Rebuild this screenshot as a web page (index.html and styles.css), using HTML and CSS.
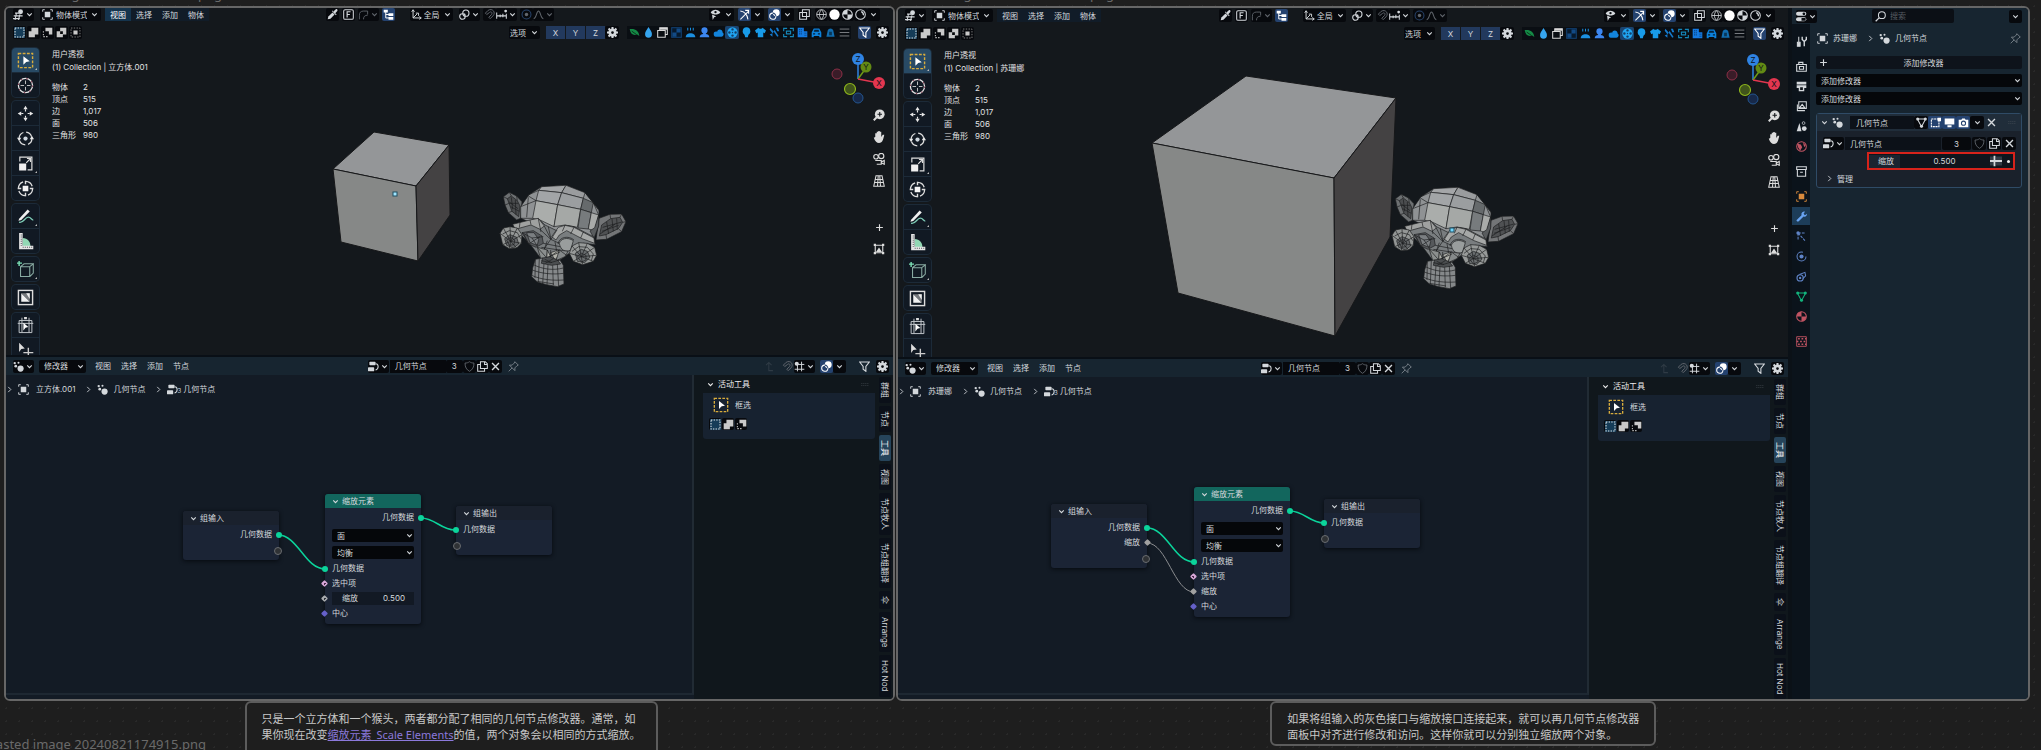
FILE: index.html
```html
<!DOCTYPE html>
<html lang="zh-CN">
<head>
<meta charset="utf-8">
<title>几何节点修改器</title>
<link rel="stylesheet" href="styles.css">
</head>
<body>
<svg class="defs" aria-hidden="true">
  <defs>
    <symbol id="chev" viewBox="0 0 16 16"><path d="M4 6l4 4 4-4" fill="none" stroke="currentColor" stroke-width="2"/></symbol>
    <symbol id="right" viewBox="0 0 16 16"><path d="M5 2l6 6-6 6" fill="none" stroke="currentColor" stroke-width="2"/></symbol>
    <symbol id="view3d" viewBox="0 0 16 16"><path d="M1 10h13M0 14h10M5 6L3 16M10 8L8 16M3 6h6" fill="none" stroke="currentColor" stroke-width="1.5"/><circle cx="11" cy="4" r="3.5" fill="currentColor"/></symbol>
    <symbol id="object" viewBox="0 0 16 16"><path d="M4 4h8v8H4z" fill="currentColor"/><path d="M1 4V1h3M12 1h3v3M15 12v3h-3M4 15H1v-3" fill="none" stroke="currentColor" stroke-width="1.3"/></symbol>
    <symbol id="dropper" viewBox="0 0 16 16"><path d="M1 15l1-4 6-6 3 3-6 6z" fill="currentColor"/><path d="M7 3l6 6 1-1-2-2 3-3c1-2-1-4-3-2L9 4 8 2z" fill="currentColor"/></symbol>
    <symbol id="fbox" viewBox="0 0 16 16"><rect x="1" y="1" width="14" height="14" rx="2" fill="none" stroke="currentColor" stroke-width="1.5"/><path d="M6 12.500V4h5M6 8h4" fill="none" stroke="currentColor" stroke-width="1.700"/></symbol>
    <symbol id="arc" viewBox="0 0 16 16"><path d="M2 15V9c0-4 2-6 6-6h6M14 3v5M8 15c0-4 2-6 6-6" fill="none" stroke="currentColor" stroke-width="1.300"/></symbol>
    <symbol id="tree" viewBox="0 0 16 16"><path d="M1 1h6v4H1zM8 6h7v4H8zM8 11.500h7v4H8z" fill="currentColor"/><path d="M4 4v9h5M4 8h5" fill="none" stroke="currentColor" stroke-width="1.400"/></symbol>
    <symbol id="axes" viewBox="0 0 16 16"><path d="M3 2v11h11M3 13l6-6M1 4l2-3 2 3M12 11l3 2-3 2M7 6h4v4" fill="none" stroke="currentColor" stroke-width="1.400"/></symbol>
    <symbol id="link" viewBox="0 0 16 16"><circle cx="10" cy="6" r="4.500" fill="none" stroke="currentColor" stroke-width="1.600"/><circle cx="5" cy="11" r="4" fill="none" stroke="currentColor" stroke-width="1.600"/><circle cx="8" cy="8" r="1.300" fill="currentColor"/></symbol>
    <symbol id="magnet" viewBox="0 0 16 16"><path d="M2 6l4-4c6-4 12 3 7 8l-4 4-2-2 4-4c2-3-1-5-3-3L4 8z" fill="none" stroke="currentColor" stroke-width="1.400"/></symbol>
    <symbol id="snap" viewBox="0 0 16 16"><path d="M1 5v9M6 8v4M10 7v5M15 7v7M1 10h14" fill="none" stroke="currentColor" stroke-width="1.500"/><circle cx="14" cy="3" r="2" fill="currentColor"/></symbol>
    <symbol id="grid" viewBox="0 0 16 16"><path d="M5 5v10M11 1v14M1 12h14M5 5h10" fill="none" stroke="currentColor" stroke-width="1.400"/><circle cx="4" cy="4" r="3" fill="currentColor"/></symbol>
    <symbol id="prop" viewBox="0 0 16 16"><circle cx="8" cy="8" r="6.500" fill="none" stroke="#27436b" stroke-width="1.500"/><circle cx="8" cy="8" r="2.500" fill="currentColor"/></symbol>
    <symbol id="curve" viewBox="0 0 16 16"><path d="M1 14c4 0 4-11 7-11s3 11 7 11" fill="none" stroke="currentColor" stroke-width="1.500"/></symbol>
    <symbol id="eye" viewBox="0 0 16 16"><path d="M1 5c3-5 11-5 14 0-3 4-11 4-14 0z" fill="currentColor"/><circle cx="8" cy="4.500" r="1.700" fill="#080b0f"/><path d="M3 8l6 3-3 1-2 4z" fill="currentColor"/></symbol>
    <symbol id="gizmo" viewBox="0 0 16 16"><path d="M2 15L14 3M9 2h5v5M2 3c6 1 10 5 11 12" fill="none" stroke="currentColor" stroke-width="1.500"/></symbol>
    <symbol id="overlay" viewBox="0 0 16 16"><circle cx="10.500" cy="5.500" r="5" fill="currentColor"/><circle cx="5.500" cy="10.500" r="4.500" fill="none" stroke="currentColor" stroke-width="1.500"/><path d="M5.500 6a4.500 4.500 0 0 1 4.500 4.500" fill="none" stroke="#24426f" stroke-width="1.500"/></symbol>
    <symbol id="xray" viewBox="0 0 16 16"><path d="M1 5h10v10H1zM5 1h10v10H5z" fill="none" stroke="currentColor" stroke-width="1.500"/></symbol>
    <symbol id="wire" viewBox="0 0 16 16"><circle cx="8" cy="8" r="7" fill="none" stroke="currentColor" stroke-width="1.200"/><path d="M1 8h14M8 1c-4 4-4 10 0 14M8 1c4 4 4 10 0 14" fill="none" stroke="currentColor" stroke-width="1.200"/></symbol>
    <symbol id="solid" viewBox="0 0 16 16"><circle cx="8" cy="8" r="7.500" fill="#fff"/></symbol>
    <symbol id="mat" viewBox="0 0 16 16"><circle cx="8" cy="8" r="7" fill="none" stroke="currentColor" stroke-width="1.500"/><path d="M8 1v7H1a7 7 0 0 1 7-7zM8 8h7a7 7 0 0 1-7 7z" fill="currentColor"/></symbol>
    <symbol id="render" viewBox="0 0 16 16"><circle cx="8" cy="8" r="7" fill="none" stroke="currentColor" stroke-width="1.500"/><path d="M9 4a4 4 0 0 1 3 5" fill="none" stroke="currentColor" stroke-width="2"/></symbol>
    <symbol id="s1" viewBox="0 0 16 16"><rect width="16" height="16" fill="#153c58"/><rect x="1.500" y="1.500" width="13" height="13" fill="none" stroke="#dfe6ea" stroke-width="1.500" stroke-dasharray="2 1.800"/></symbol>
    <symbol id="s2" viewBox="0 0 16 16"><path d="M1 6h4V1h10v10h-5v4H1z" fill="#c9c9c9"/></symbol>
    <symbol id="s3" viewBox="0 0 16 16"><path d="M5 1h10v10h-5V6H5z" fill="#c9c9c9"/><path d="M2 6v8h8" fill="none" stroke="#c9c9c9" stroke-width="1.500" stroke-dasharray="2 2"/></symbol>
    <symbol id="s4" viewBox="0 0 16 16"><path d="M1 6h5V1h9v10h-5v4H1z" fill="#c9c9c9"/><path d="M6 6h4v4H6z" fill="#05070a"/></symbol>
    <symbol id="s5" viewBox="0 0 16 16"><path d="M5 5h6v6H5z" fill="#c9c9c9"/><rect x="1.500" y="1.500" width="13" height="13" fill="none" stroke="#8a8a8a" stroke-width="1.300" stroke-dasharray="2 2"/></symbol>
    <symbol id="gear" viewBox="0 0 16 16"><circle cx="8" cy="8" r="4" fill="none" stroke="currentColor" stroke-width="4"/><path d="M8 0v3M8 13v3M0 8h3M13 8h3M2.300 2.300l2 2M11.700 11.700l2 2M2.300 13.700l2-2M11.700 4.300l2-2" stroke="currentColor" stroke-width="3"/></symbol>
    <symbol id="leaf" viewBox="0 0 16 16"><path d="M1 3c8-1 13 2 14 10l-3-2c-6 2-10-1-11-8z" fill="#148a46"/><path d="M4 6l7 5" stroke="#06130c"/></symbol>
    <symbol id="drop" viewBox="0 0 16 16"><path d="M8 0c3 5 5 7 5 10a5 5.500 0 0 1-10 0c0-3 2-5 5-10z" fill="#35a4ee"/></symbol>
    <symbol id="cards" viewBox="0 0 16 16"><path d="M1 5h11v10H1zM4 5V1h11v10h-3" fill="none" stroke="#d8d8d8" stroke-width="1.500"/><path d="M4 1h11v3H4z" fill="#d8d8d8"/></symbol>
    <symbol id="quad" viewBox="0 0 16 16"><rect x="1" y="1" width="14" height="14" fill="#07192c" stroke="#124072" stroke-width="1.500"/><path d="M8 2h6v6H8zM2 8h6v6H2z" fill="#124a85"/></symbol>
    <symbol id="steam" viewBox="0 0 16 16"><path d="M1 15c0-8 14-8 14 0z" fill="#1b8fe0"/><path d="M4 1v4M8 1v4M12 1v4" stroke="#1b8fe0" stroke-width="1.500"/></symbol>
    <symbol id="user" viewBox="0 0 16 16"><circle cx="8" cy="5" r="4.500" fill="#3c86f0"/><path d="M1 15c0-4 3-5 5-5V7h4v3c2 0 5 1 5 5z" fill="#3c86f0"/></symbol>
    <symbol id="cloud" viewBox="0 0 16 16"><path d="M1 10c0-3 3-4 5-3 1-5 8-4 8 1 3 2 1 6-2 6H4c-2 0-3-2-3-4z" fill="#1384dc"/></symbol>
    <symbol id="ball" viewBox="0 0 16 16"><circle cx="8" cy="8" r="7.500" fill="#20a5f2"/><g fill="#153f69"><circle cx="8" cy="3.500" r="1.700"/><circle cx="8" cy="12.500" r="1.700"/><circle cx="3.500" cy="8" r="1.700"/><circle cx="12.500" cy="8" r="1.700"/><circle cx="8" cy="8" r="1"/></g></symbol>
    <symbol id="bulb" viewBox="0 0 16 16"><circle cx="8" cy="6" r="5.500" fill="#189be9"/><path d="M5 10h6l-1 5H6z" fill="#189be9"/></symbol>
    <symbol id="shirt" viewBox="0 0 16 16"><path d="M5 1c1 2 5 2 6 0l5 4-2 4-2-1v7H4V8L2 9 0 5z" fill="#189be9"/></symbol>
    <symbol id="scatter" viewBox="0 0 16 16"><path d="M2 1l5 6-2 2-4-5zM8 4l6 9-2 1-5-7zM1 11l4-2v5zM10 1l3 0 2 5-3 0z" fill="#147ace"/></symbol>
    <symbol id="scan" viewBox="0 0 16 16"><path d="M1 6V2h5M10 2h5v4M15 10v4h-5M6 14H1v-4M5 6h6v4H5z" fill="none" stroke="#1586b8" stroke-width="1.700"/></symbol>
    <symbol id="city" viewBox="0 0 16 16"><path d="M1 15V1h9v5h5v9z" fill="#147ae2"/><path d="M3 4h5M3 7h5M3 10h5M11 9h3M11 12h3" stroke="#08315f" stroke-width="1.300" stroke-dasharray="1.500 1"/></symbol>
    <symbol id="car" viewBox="0 0 16 16"><path d="M1 15V8l3-6h8l3 6v7h-3v-2H4v2z" fill="#0c81db"/><path d="M5 4h6l1 3H4zM3 9h3v2H3zM10 9h3v2h-3z" fill="#06233d"/></symbol>
    <symbol id="tent" viewBox="0 0 16 16"><path d="M2 14l2-9c1-4 7-4 8 0l2 9z" fill="#116cae"/><path d="M6 7h4v5H6z" fill="#083556"/></symbol>
    <symbol id="menu" viewBox="0 0 16 16"><path d="M1 3h14M1 8h14M1 13h14" stroke="currentColor" stroke-width="1.300"/></symbol>
    <symbol id="filter" viewBox="0 0 16 16"><path d="M1 1.500h14L10 8v7l-4-3V8z" fill="none" stroke="currentColor" stroke-width="1.600"/></symbol>
    <symbol id="boxsel" viewBox="0 0 24 24"><rect x="2" y="2" width="20" height="20" fill="none" stroke="#d9ad3c" stroke-width="2" stroke-dasharray="4 2"/><path d="M9 6l9 7-5 1-4 4z" fill="#fff"/></symbol>
    <symbol id="cursor" viewBox="0 0 24 24"><circle cx="12" cy="12" r="10" fill="none" stroke="#e6e6e6" stroke-width="1.800"/><circle cx="12" cy="12" r="10" fill="none" stroke="#8a4458" stroke-width="1.800" stroke-dasharray="2 6"/><path d="M12 5v5M12 14v5M5 12h5M14 12h5" stroke="#ccc" stroke-width="1.300"/></symbol>
    <symbol id="move" viewBox="0 0 24 24"><path d="M12 1l3 5H9zM12 23l3-5H9zM1 12l5-3v6zM23 12l-5-3v6z" fill="#e8e8e8"/><path d="M12 6v3M12 15v3M6 12h3M15 12h3" stroke="#e8e8e8" stroke-width="1.600"/></symbol>
    <symbol id="rotate" viewBox="0 0 24 24"><circle cx="12" cy="12" r="9" fill="none" stroke="#ddd" stroke-width="1.800" stroke-dasharray="10 4.100"/><circle cx="12" cy="12" r="3" fill="#cfd8e0"/><path d="M0 11h6l-3 5zM24 13h-6l3-5z" fill="#e8e8e8"/></symbol>
    <symbol id="scale" viewBox="0 0 24 24"><path d="M4 9V3h17v18h-6" fill="none" stroke="#ddd" stroke-width="1.700"/><path d="M3 12h10v10H3z" fill="#f0f0f0"/><path d="M13 11l5-5M14 5h5v5" fill="none" stroke="#ddd" stroke-width="1.600"/></symbol>
    <symbol id="transform" viewBox="0 0 24 24"><circle cx="12" cy="12" r="10" fill="none" stroke="#ddd" stroke-width="1.800" stroke-dasharray="12 3.700"/><path d="M8 8h8v8H8z" fill="#f4f4f4"/><path d="M12 1v5M12 18v5M1 12h5M18 12h5" stroke="#ddd" stroke-width="2"/></symbol>
    <symbol id="annotate" viewBox="0 0 24 24"><path d="M3 15L15 2l3 3L6 17l-4 1z" fill="#f0f0f0"/><path d="M3 20c6 2 8-7 13-7 4 0 4 4 7 4" fill="none" stroke="#7cc9b4" stroke-width="1.800"/></symbol>
    <symbol id="measure" viewBox="0 0 24 24"><path d="M8 19V7c7 0 11 5 11 12z" fill="#92d8b4"/><path d="M3 0h5v18h15v5H3z" fill="#e6e6e6"/><path d="M6 2v16M8 20h14" stroke="#55595c" stroke-width="1.500" stroke-dasharray="1.500 1.500"/></symbol>
    <symbol id="addcube" viewBox="0 0 24 24"><path d="M5 8h13v14H5zM5 8l5-4h13l-5 4M23 4v13l-5 5" fill="none" stroke="#88aaa2" stroke-width="1.500"/><path d="M3 0v7M0 3h7" stroke="#7be0b5" stroke-width="2"/></symbol>
    <symbol id="boolean" viewBox="0 0 24 24"><rect x="2" y="2" width="20" height="20" fill="none" stroke="#ddd" stroke-width="2"/><path d="M6 6h12v12z" fill="#76797d"/><path d="M6 6l12 12H6zM13 6h5v8z" fill="#f0f0f0"/></symbol>
    <symbol id="cage" viewBox="0 0 24 24"><path d="M3 5h18v17H3zM7 1v21M17 1v21M1 9h22" fill="none" stroke="#bfc4c9" stroke-width="1.400"/><path d="M9 8l7 6-4 1-3 4z" fill="#fff"/><path d="M10 0h4v3h-4z" fill="#ddd"/></symbol>
    <symbol id="tweak" viewBox="0 0 24 24"><path d="M3 1l8 8-5 1-3 4z" fill="#ddd"/><path d="M16 8v14M9 15h14" stroke="#ccc" stroke-width="2"/></symbol>
    <symbol id="zoomin" viewBox="0 0 16 16"><circle cx="9" cy="7" r="6.500" fill="currentColor"/><path d="M1 15l4-4" stroke="currentColor" stroke-width="2.500"/><path d="M9 4v6M6 7h6" stroke="#14181c" stroke-width="1.500"/></symbol>
    <symbol id="hand" viewBox="0 0 16 16"><path d="M3 8V3h2v4V1h2v6V0h2v7V1h2v7l2-3h2c-1 5-2 11-7 11-3 0-5-2-7-7z" fill="currentColor"/></symbol>
    <symbol id="camera" viewBox="0 0 16 16"><circle cx="4" cy="5" r="3" fill="none" stroke="currentColor" stroke-width="1.500"/><circle cx="11" cy="4" r="3.500" fill="none" stroke="currentColor" stroke-width="1.500"/><path d="M3 10h8v5H5M11 12l4-2v5l-4-2" fill="none" stroke="currentColor" stroke-width="1.500"/></symbol>
    <symbol id="persp" viewBox="0 0 16 16"><path d="M4 1h8l3 14H1zM3 6h10M2 10h12M7 1L6 15M9 1l1 14" fill="none" stroke="currentColor" stroke-width="1.400"/></symbol>
    <symbol id="plus" viewBox="0 0 16 16"><path d="M8 2v12M2 8h12" stroke="currentColor" stroke-width="2"/></symbol>
    <symbol id="image" viewBox="0 0 16 16"><path d="M3 3h10v10H3z" fill="none" stroke="currentColor" stroke-width="1.500"/><path d="M4 12l4-6 4 6zM1 1h3v3H1zM12 1h3v3h-3zM1 12h3v3H1zM12 12h3v3h-3z" fill="currentColor"/></symbol>
    <symbol id="geo" viewBox="0 0 16 16"><circle cx="11" cy="11" r="4.500" fill="currentColor"/><circle cx="2.500" cy="3" r="1.700" fill="currentColor"/><circle cx="8" cy="2.500" r="1.500" fill="currentColor"/><circle cx="4" cy="7.500" r="2" fill="currentColor"/></symbol>
    <symbol id="ntree" viewBox="0 0 16 16"><rect x="2" y="1" width="9" height="5" rx="1" fill="currentColor"/><rect x="0" y="9" width="9" height="6" rx="1" fill="currentColor"/><path d="M11 4c5 0 5 8 0 9" fill="none" stroke="currentColor" stroke-width="1.500"/></symbol>
    <symbol id="shield" viewBox="0 0 16 16"><path d="M8 1c2 1.500 4 2 6.500 2 0 6-2 9.500-6.500 12C3.500 12.500 1.500 9 1.500 3 4 3 6 2.500 8 1z" fill="none" stroke="currentColor" stroke-width="1.300"/></symbol>
    <symbol id="copy" viewBox="0 0 16 16"><path d="M5 1h7l3 3v7H5zM11 1v4h4M5 5H1v10h10v-4" fill="none" stroke="currentColor" stroke-width="1.500"/></symbol>
    <symbol id="x" viewBox="0 0 16 16"><path d="M3 3l10 10M13 3L3 13" stroke="currentColor" stroke-width="2"/></symbol>
    <symbol id="pin" viewBox="0 0 16 16"><path d="M10 1l5 5-2 1-3 3v4L2 6h4l3-3zM6 10l-5 5" fill="none" stroke="currentColor" stroke-width="1.300"/></symbol>
    <symbol id="up" viewBox="0 0 16 16"><path d="M3 6l4-4 4 4M7 2v12h6" fill="none" stroke="currentColor" stroke-width="1.500"/></symbol>
    <symbol id="props" viewBox="0 0 16 16"><rect x="0" y="1" width="15" height="6" rx="3" fill="currentColor"/><rect x="0" y="9" width="15" height="6" rx="3" fill="currentColor"/><circle cx="11.500" cy="4" r="2" fill="#0a0e13"/><path d="M8 10h6v4H8z" fill="#0a0e13"/></symbol>
    <symbol id="search" viewBox="0 0 16 16"><circle cx="10" cy="6" r="5" fill="none" stroke="currentColor" stroke-width="1.500"/><path d="M1 15l5-5" stroke="currentColor" stroke-width="1.800"/></symbol>
    <symbol id="tool" viewBox="0 0 16 16"><path d="M4 1v8M2 9h4v6H2z" stroke="currentColor" stroke-width="1.500" fill="currentColor"/><path d="M9 1v4l3 3 3-3V1M12 7v8" fill="none" stroke="currentColor" stroke-width="2"/></symbol>
    <symbol id="rend" viewBox="0 0 16 16"><path d="M1 5h14v10H1zM4 5V2h6v3M5 8h6v4H5z" fill="none" stroke="currentColor" stroke-width="1.600"/></symbol>
    <symbol id="output" viewBox="0 0 16 16"><path d="M1 1h14v4H1zM1 6h14v4h-3v5H4v-5H1z" fill="currentColor"/><path d="M6 9h4v4H6z" fill="#10161c"/></symbol>
    <symbol id="layer" viewBox="0 0 16 16"><path d="M4 1h11v10H4zM2 5v9h11M5 10l4-5 4 5z" fill="none" stroke="currentColor" stroke-width="1.500"/></symbol>
    <symbol id="scn" viewBox="0 0 16 16"><path d="M1 15L5 3l3 12z" fill="currentColor"/><circle cx="12" cy="11" r="3.500" fill="currentColor"/><circle cx="11" cy="3" r="2" fill="none" stroke="currentColor"/></symbol>
    <symbol id="world" viewBox="0 0 16 16"><circle cx="8" cy="8" r="7" fill="none" stroke="currentColor" stroke-width="1.500"/><path d="M2 4l5 1 2 4-3 5-3-5zM10 2l4 4-2 3z" fill="currentColor"/></symbol>
    <symbol id="archive" viewBox="0 0 16 16"><path d="M1 1h14v4H1zM2 5v10h12V5M6 9h4" fill="none" stroke="currentColor" stroke-width="1.600"/></symbol>
    <symbol id="wrench" viewBox="0 0 16 16"><path d="M1 13l7-7c-1-4 3-6 5-5l-2 3 2 2 3-2c0 4-3 5-5 4l-7 7c-2 1-4-1-3-2z" fill="currentColor"/></symbol>
    <symbol id="parts" viewBox="0 0 16 16"><path d="M3 3v11M3 3h10M3 3l10 11" stroke="currentColor" stroke-width="1.500" stroke-dasharray="4 1.500"/><circle cx="3" cy="3" r="2.500" fill="currentColor"/></symbol>
    <symbol id="phys" viewBox="0 0 16 16"><circle cx="8" cy="8" r="6.500" fill="none" stroke="currentColor" stroke-width="1.500" stroke-dasharray="32 9"/><circle cx="8" cy="8" r="3" fill="currentColor"/></symbol>
    <symbol id="constr" viewBox="0 0 16 16"><circle cx="6" cy="10" r="4.500" fill="none" stroke="currentColor" stroke-width="1.700"/><circle cx="6" cy="10" r="1.700" fill="currentColor"/><path d="M5 5l8-3 1 5-4 4" fill="none" stroke="currentColor" stroke-width="1.500"/></symbol>
    <symbol id="mesh" viewBox="0 0 16 16"><path d="M2 3h12L8 14z" fill="none" stroke="currentColor" stroke-width="1.500"/><circle cx="2.500" cy="3" r="2.200" fill="currentColor"/><circle cx="13.500" cy="3" r="2.200" fill="currentColor"/><circle cx="8" cy="13.500" r="2.200" fill="currentColor"/></symbol>
    <symbol id="checker" viewBox="0 0 16 16"><path d="M1 1h14v14H1z" fill="none" stroke="currentColor" stroke-width="1.300"/><path d="M3 4h12M3 12h12" stroke="currentColor" stroke-width="2.500" stroke-dasharray="2.500 2.500"/><path d="M1 8h14" stroke="currentColor" stroke-width="2.500" stroke-dasharray="2.500 2.500"/></symbol>
    <symbol id="vertsel" viewBox="0 0 16 16"><path d="M2 3h11v11H2z" fill="none" stroke="currentColor" stroke-width="1.600" stroke-dasharray="3 1"/><path d="M11 1h5v5h-5z" fill="#fff"/></symbol>
    <symbol id="screen" viewBox="0 0 16 16"><path d="M1 2h14v9H1zM5 12h6v3H5z" fill="currentColor"/></symbol>
    <symbol id="photo" viewBox="0 0 16 16"><path d="M1 4h4l1-2h4l1 2h4v11H1z" fill="currentColor"/><circle cx="8" cy="9" r="3" fill="none" stroke="#24426f" stroke-width="1.500"/></symbol>
    <symbol id="attr" viewBox="0 0 16 16"><path d="M0 2h5v5H0zM8 2h8v5H8zM0 9h5v5H0zM8 9h8v5H8z" fill="#313a44"/><path d="M6 1v14M0 8h16" stroke="currentColor" stroke-width="2.500"/></symbol>
    <symbol id="grip" viewBox="0 0 16 8"><path d="M1 2h14M1 6h14" stroke="currentColor" stroke-width="1.500" stroke-dasharray="1.500 2.500"/></symbol>

    <g id="axis-gizmo">
      <path d="M32 31V12" stroke="#2f83e3" stroke-width="1.500"/><path d="M32 31l8-11" stroke="#6f9a16" stroke-width="1.500"/><path d="M32 31l21 4" stroke="#e3364f" stroke-width="1.500"/>
      <circle cx="11" cy="26" r="5" fill="#3a1c28" stroke="#8c2f46"/><circle cx="32" cy="50" r="5" fill="#17294a" stroke="#24558f"/>
      <circle cx="24" cy="41" r="5.500" fill="#40541b" stroke="#8db51c" stroke-width="1.200"/>
      <circle cx="40" cy="19" r="5.500" fill="#638a14"/><circle cx="32" cy="11" r="6" fill="#2f83e3"/><circle cx="53" cy="35" r="6" fill="#e3364f"/>
      <g font-family="Inter, sans-serif" font-size="8" text-anchor="middle" fill="#0c1118"><text x="32" y="14">Z</text><text x="40" y="22">Y</text><text x="53" y="38">X</text></g>
    </g>

    <g id="monkey" stroke="#1b1c1e" stroke-width="2" stroke-linejoin="round" fill="none">
      <path fill="#6d7072" d="M160 260L178 247 200 258 216 275 212 325 200 330 175 308 165 285z"/>
      <path fill="#4b4d4f" d="M172 266L184 258 202 272 210 288 206 320 186 304z"/>
      <path d="M160 260l12 6M178 247l6 11M200 258l2 14M165 285l10-4M175 308l11-4M178 276l26 20M184 262l4 36M196 270l2 44M182 290l26 14M175 280l30 0"/>
      <path fill="#737577" d="M447 325L480 313 515 312 528 335 515 365 470 388 438 390z"/>
      <path fill="#4f5153" d="M455 345L482 326 510 322 518 337 505 356 468 374 448 378z"/>
      <path d="M480 313l2 13M515 312l-5 10M528 335l-10 2M515 365l-10-9M470 388l-2-14M458 352l58-16M456 364l50-18M470 336l6 36M486 326l4 38M500 325l2 34M450 372l46-30"/>
      <path fill="#8f9294" d="M275 230L348 226 405 248 447 300 446 345 432 385 300 362 212 325 212 290 237 254z"/>
      <path fill="#a4a6a8" d="M275 230L348 226 335 248 266 241z"/>
      <path fill="#9a9c9e" d="M348 226L405 248 400 265 335 248z"/>
      <path fill="#a2a5a7" d="M266 241L335 248 323 284 258 272z"/>
      <path fill="#9b9ea0" d="M335 248L400 265 392 298 323 284z"/>
      <path fill="#aaadab" d="M258 272L323 284 312 350 270 330 248 325z"/>
      <path fill="#a5a8a6" d="M323 284L392 298 382 352 345 345 312 350z"/>
      <path fill="#666a6c" d="M400 265L430 278 424 308 392 298z"/>
      <path fill="#777b7d" d="M392 298L424 308 415 357 384 354z"/>
      <path fill="#a9aba9" d="M424 308L446 315 434 362 415 357z"/>
      <path fill="#595c5e" d="M446 315l0 33-14 37-12-22 14-10z"/>
      <path d="M405 248l25 30 17 24M430 278l16 37M237 254l29-13M212 290l46-18M235 262l-5 60M258 272l-23-14M212 325l36 0"/>
      <path fill="#797d7f" d="M190 345L240 332 265 326 285 345 320 362 345 346 372 350 430 380 436 404 400 400 330 450 308 455 272 445 240 402 196 358z"/>
      <path fill="#9fa1a0" d="M188 343L240 330 265 325 283 348 270 358 243 345 196 358z"/>
      <path fill="#a6a8a7" d="M325 352L345 346 372 352 432 384 434 400 396 386 350 362 328 375 318 390 305 380z"/>
      <path fill="#56595c" d="M216 368L250 362 276 378 280 400 258 412 236 402z"/>
      <path fill="#7b7f82" d="M230 368L252 368 266 388 262 406 240 398z"/>
      <path fill="#999d9d" d="M328 400c4-14 24-20 42-8l-8 28c-14 8-30 2-34-20z"/>
      <path d="M324 402c4-22 32-26 48-12M216 368l30 16 34-4M246 384l16 24M222 374l14 28 34-22M283 348l20 40 18-28M270 358l32 30-20 30M302 388l26 12M265 326l8 40M295 350l8 38M345 346l-8 18M372 352l-10 20M400 366l-8 18M240 330l3 14M210 337l-2 16M280 400l50 10M274 412l54 8M292 392l-12 34M315 395l5 28"/>
      <path fill="#8b8f8e" d="M262 412L292 420 290 446 272 445z"/><path fill="#b0b1aa" d="M292 420L302 440 290 448zM302 428L325 420 330 432 315 450z"/>
      <path fill="#85898a" d="M328 420L354 424 345 440 318 452z"/><path d="M262 412l30 34 36-26 22 16M302 420v34M280 448l50-22"/>
      <path fill="#85888a" d="M256 448L278 444 300 456 330 450 340 466 342 522 322 530 290 524 262 516 245 500 248 474z"/>
      <path fill="#4b4e50" d="M278 444L300 440 322 450 332 462 305 466 274 460z"/>
      <path d="M256 448l-1 56M268 446l-3 70M282 460l-4 62M294 464l-3 60M308 466l2 60M322 462l4 66M250 464c28 14 60 18 90 10M247 480c30 12 64 14 94 10M245 496c30 14 66 16 97 14M262 514l50 8M274 452l28 6 26-8M284 448l22 10M310 446l-24 14"/>
      <path fill="#939695" d="M150 370L160 354 180 350 202 354 216 374 214 400 200 414 178 416 158 404z"/>
      <path fill="#66696b" d="M164 386L180 374 200 382 206 402 190 414 170 406z"/>
      <path d="M182 394L150 370M182 394l-22-40M182 394l-2-44M182 394l20-40M182 394l34-20M182 394l32 6M182 394l18 20M182 394l-4 22M182 394l-24 10M158 372l20-10 24 6 10 18M170 390l12-8 12 8-2 14-14 2z"/>
      <path fill="#979a99" d="M358 430L366 408 386 398 412 400 434 412 440 436 430 454 398 464 370 454z"/>
      <path fill="#696d6f" d="M376 430L394 418 412 424 420 442 404 458 382 454z"/>
      <path d="M394 440L358 430M394 440l-28-32M394 440l-8-42M394 440l18-40M394 440l40-28M394 440l46-4M394 440l36 14M394 440l4 24M394 440l-24 14M366 424l20-14 26 2 18 20-6 20M382 440l12-10 14 6 0 14-14 6z"/>
    </g>
  </defs>
</svg>

<main class="board">
  <section class="column">
    <p class="file-name file-name-top">Pasted image 20240821174915.png</p>
    <div class="card">
      <div class="editors">
        <section class="viewport">
          <svg class="scene" aria-label="立方体和猴头">
            <g stroke="#17181a" stroke-width="1" stroke-linejoin="round">
              <path fill="#949698" d="M327 161l41-37 75 13-33 41z"/><path fill="#868887" d="M327 161l83 17 2 75-77-19z"/><path fill="#444243" d="M410 178l33-41 1 70-32 46z"/>
            </g>
            <rect x="387" y="184" width="4" height="4" fill="#a2e6ff" stroke="#1f4e62"/>
            <use href="#monkey" transform="translate(444 102) scale(.3333)"/>
          </svg>
          <header class="bar">
            <button class="dark pair" aria-label="编辑器类型"><svg class="i"><use href="#view3d"/></svg><svg class="c"><use href="#chev"/></svg></button>
            <label class="dark sel mode"><svg class="i"><use href="#object"/></svg><select aria-label="模式"><option>物体模式</option></select><svg class="c"><use href="#chev"/></svg></label>
            <nav class="menus boxed"><button class="on">视图</button><button>选择</button><button>添加</button><button>物体</button></nav>
            <span class="grow3"></span>
            <div class="tools-mid">
              <button class="dark" aria-label="吸管"><svg class="i"><use href="#dropper"/></svg></button>
              <button class="dark" aria-label="F"><svg class="i"><use href="#fbox"/></svg></button>
              <button class="dark pair dim" aria-label="曲线"><svg class="i"><use href="#arc"/></svg><svg class="c"><use href="#chev"/></svg></button>
              <button class="blue" aria-label="层级"><svg class="i"><use href="#tree"/></svg></button>
              <label class="dark sel orient"><svg class="i"><use href="#axes"/></svg><select aria-label="坐标系"><option>全局</option></select><svg class="c"><use href="#chev"/></svg></label>
              <button class="dark pair" aria-label="轴心"><svg class="i"><use href="#link"/></svg><svg class="c"><use href="#chev"/></svg></button>
              <div class="set"><button class="dark dim" aria-label="吸附"><svg class="i"><use href="#magnet"/></svg></button><button class="dark pair" aria-label="吸附选项"><svg class="i"><use href="#snap"/></svg><svg class="c"><use href="#chev"/></svg></button></div>
              <div class="set"><button class="dark dim" aria-label="衰减"><svg class="i"><use href="#prop"/></svg></button><button class="dark pair dim" aria-label="衰减曲线"><svg class="i"><use href="#curve"/></svg><svg class="c"><use href="#chev"/></svg></button></div>
            </div>
            <span class="grow4"></span>
            <div class="tools-right">
              <button class="dark wide" aria-label="可见性"><svg class="i"><use href="#eye"/></svg><svg class="c"><use href="#chev"/></svg></button>
              <div class="set"><button class="blue" aria-label="控件"><svg class="i"><use href="#gizmo"/></svg></button><button class="dark" aria-label="控件选项"><svg class="c"><use href="#chev"/></svg></button></div>
              <div class="set"><button class="blue" aria-label="叠加层"><svg class="i"><use href="#overlay"/></svg></button><button class="dark" aria-label="叠加层选项"><svg class="c"><use href="#chev"/></svg></button></div>
              <button class="dark" aria-label="透视"><svg class="i"><use href="#xray"/></svg></button>
              <div class="set"><button class="dark" aria-label="线框"><svg class="i"><use href="#wire"/></svg></button><button class="dark" aria-label="实体"><svg class="i"><use href="#solid"/></svg></button><button class="dark" aria-label="材质"><svg class="i"><use href="#mat"/></svg></button><button class="dark" aria-label="渲染"><svg class="i"><use href="#render"/></svg></button><button class="dark" aria-label="着色选项"><svg class="c"><use href="#chev"/></svg></button></div>
            </div>
          </header>
          <header class="bar bar-second">
            <div class="set select-modes"><button class="dark" aria-label="新建选择"><svg><use href="#s1"/></svg></button><button class="dark" aria-label="扩展"><svg><use href="#s2"/></svg></button><button class="dark" aria-label="减去"><svg><use href="#s3"/></svg></button><button class="dark" aria-label="反转"><svg><use href="#s4"/></svg></button><button class="dark" aria-label="相交"><svg><use href="#s5"/></svg></button></div>
            <div class="push">
              <button class="dark opt">选项<svg class="c"><use href="#chev"/></svg></button>
              <div class="xyz"><button>X</button><button>Y</button><button>Z</button></div>
              <button class="dark" aria-label="设置"><svg class="i"><use href="#gear"/></svg></button>
            </div>
            <div class="shelf">
              <button aria-label="植物"><svg><use href="#leaf"/></svg></button><button aria-label="液体"><svg><use href="#drop"/></svg></button><button aria-label="卡片"><svg><use href="#cards"/></svg></button><button aria-label="网格"><svg><use href="#quad"/></svg></button><button aria-label="烟雾"><svg><use href="#steam"/></svg></button><button aria-label="角色"><svg><use href="#user"/></svg></button><button aria-label="云"><svg><use href="#cloud"/></svg></button><button class="blue" aria-label="球"><svg><use href="#ball"/></svg></button><button aria-label="灯"><svg><use href="#bulb"/></svg></button><button aria-label="布料"><svg><use href="#shirt"/></svg></button><button aria-label="散布"><svg><use href="#scatter"/></svg></button><button aria-label="扫描"><svg><use href="#scan"/></svg></button><button aria-label="建筑"><svg><use href="#city"/></svg></button><button aria-label="汽车"><svg><use href="#car"/></svg></button><button aria-label="帐篷"><svg><use href="#tent"/></svg></button><button aria-label="菜单"><svg><use href="#menu"/></svg></button>
            </div>
            <div class="ends"><button class="blue" aria-label="筛选"><svg class="i"><use href="#filter"/></svg></button><button class="dark" aria-label="设置"><svg class="i"><use href="#gear"/></svg></button></div>
          </header>
          <div class="stage">
            <div class="toolbar">
              <div class="tool-group"><button class="on sub" aria-label="框选"><svg><use href="#boxsel"/></svg></button><button aria-label="游标"><svg><use href="#cursor"/></svg></button></div>
              <div class="tool-group"><button aria-label="移动"><svg><use href="#move"/></svg></button><button aria-label="旋转"><svg><use href="#rotate"/></svg></button><button class="sub" aria-label="缩放"><svg><use href="#scale"/></svg></button><button aria-label="变换"><svg><use href="#transform"/></svg></button></div>
              <div class="tool-group"><button class="sub" aria-label="标注"><svg><use href="#annotate"/></svg></button><button aria-label="测量"><svg><use href="#measure"/></svg></button></div>
              <div class="tool-group"><button class="sub" aria-label="添加立方体"><svg><use href="#addcube"/></svg></button></div>
              <div class="tool-group"><button aria-label="布尔"><svg><use href="#boolean"/></svg></button></div>
              <div class="tool-group"><button aria-label="框架"><svg><use href="#cage"/></svg></button><button aria-label="调整"><svg><use href="#tweak"/></svg></button></div>
            </div>
            <div class="info">
              <p>用户透视</p><p>(1) Collection | 立方体.001</p>
              <dl><dt>物体</dt><dd>2</dd><dt>顶点</dt><dd>515</dd><dt>边</dt><dd>1,017</dd><dt>面</dt><dd>506</dd><dt>三角形</dt><dd>980</dd></dl>
            </div>
            <div class="nav-side">
              <svg class="axis"><use href="#axis-gizmo"/></svg>
              <div class="nav-icons"><button aria-label="缩放视图"><svg><use href="#zoomin"/></svg></button><button aria-label="平移"><svg><use href="#hand"/></svg></button><button aria-label="相机"><svg><use href="#camera"/></svg></button><button aria-label="透视"><svg><use href="#persp"/></svg></button><button class="apart" aria-label="添加"><svg><use href="#plus"/></svg></button><button aria-label="图像"><svg><use href="#image"/></svg></button></div>
            </div>
          </div>
        </section>
        <section class="nodes">
          <header class="bar node-bar">
            <button class="dark pair" aria-label="编辑器类型"><svg class="i"><use href="#geo"/></svg><svg class="c"><use href="#chev"/></svg></button>
            <label class="dark sel kind"><select aria-label="类型"><option>修改器</option></select><svg class="c"><use href="#chev"/></svg></label>
            <nav class="menus"><button>视图</button><button>选择</button><button>添加</button><button>节点</button></nav>
            <span class="grow5"></span>
            <div class="set data"><button class="dark pair" aria-label="浏览"><svg class="i"><use href="#ntree"/></svg><svg class="c"><use href="#chev"/></svg></button><input class="name" aria-label="节点树" value="几何节点"><button class="dark count">3</button><button class="dark dim" aria-label="伪用户"><svg class="i"><use href="#shield"/></svg></button><button class="dark" aria-label="复制"><svg class="i"><use href="#copy"/></svg></button><button class="dark" aria-label="断开"><svg class="i"><use href="#x"/></svg></button><button class="pin" aria-label="固定"><svg class="i"><use href="#pin"/></svg></button></div>
            <span class="grow7"></span>
            <div class="node-right"><button class="faint" aria-label="上级"><svg class="i"><use href="#up"/></svg></button><div class="set"><button class="dim" aria-label="吸附"><svg class="i"><use href="#magnet"/></svg></button><button class="dark pair" aria-label="吸附到"><svg class="i"><use href="#grid"/></svg><svg class="c"><use href="#chev"/></svg></button></div><div class="set"><button class="blue" aria-label="叠加层"><svg class="i"><use href="#overlay"/></svg></button><button class="dark" aria-label="叠加层选项"><svg class="c"><use href="#chev"/></svg></button></div></div>
            <div class="ends"><button aria-label="筛选"><svg class="i"><use href="#filter"/></svg></button><button class="dark" aria-label="设置"><svg class="i"><use href="#gear"/></svg></button></div>
          </header>
          <div class="node-body">
            <div class="node-canvas">
              <div class="crumbs"><svg class="sep"><use href="#right"/></svg><svg class="i"><use href="#object"/></svg><span>立方体.001</span><svg class="sep"><use href="#right"/></svg><svg class="i"><use href="#geo"/></svg><span>几何节点</span><svg class="sep"><use href="#right"/></svg><svg class="i"><use href="#ntree"/></svg><sub>3</sub><span>几何节点</span></div>
              <svg class="wires"><path d="M272 160c20 0 27 34 47 34M415 143c14 0 20 12 34 12" fill="none" stroke="#0bd49b" stroke-width="1.500"/></svg>
              <article class="node n-in-a"><h3><svg class="c"><use href="#chev"/></svg>组输入</h3><p class="out geo">几何数据</p><p class="out virt"></p></article>
              <article class="node n-scale-a"><h3 class="teal"><svg class="c"><use href="#chev"/></svg>缩放元素</h3><p class="out geo">几何数据</p>
                <label class="drop"><select aria-label="域"><option>面</option></select><svg class="c"><use href="#chev"/></svg></label><label class="drop"><select aria-label="缩放模式"><option>均衡</option></select><svg class="c"><use href="#chev"/></svg></label>
                <p class="in geo">几何数据</p><p class="in dia pink">选中项</p><div class="in dia grey field"><label for="node-scale">缩放</label><input id="node-scale" value="0.500"></div><p class="in dia violet">中心</p></article>
              <article class="node n-out-a"><h3><svg class="c"><use href="#chev"/></svg>组输出</h3><p class="in geo">几何数据</p><p class="in virt"></p></article>
            </div>
            <aside class="side">
              <div class="panel"><h2><svg class="c"><use href="#chev"/></svg>活动工具<svg class="grip"><use href="#grip"/></svg></h2>
                <div class="panel-box"><p><svg class="bx"><use href="#boxsel"/></svg>框选</p><div class="set select-modes"><button class="dark" aria-label="新建"><svg><use href="#s1"/></svg></button><button class="dark" aria-label="扩展"><svg><use href="#s2"/></svg></button><button class="dark" aria-label="减去"><svg><use href="#s3"/></svg></button></div></div></div>
              <nav class="tabs"><button>群组</button><button>节点</button><button class="on">工具</button><button>视图</button><button>节点牧人</button><button>节点组翻译</button><button>伞</button><button>Arrange</button><button>Hot Nod</button></nav>
            </aside>
          </div>
        </section>
      </div>
    </div>
    <div class="below">
      <p class="file-name file-name-bottom">Pasted image 20240821174915.png</p>
      <div class="note note-a">只是一个立方体和一个猴头，两者都分配了相同的几何节点修改器。通常，如<br>果你现在改变<a href="#scale-elements">缩放元素_Scale Elements</a>的值，两个对象会以相同的方式缩放。</div>
    </div>
  </section>

  <section class="column">
    <p class="file-name file-name-top">Pasted image 20240821174915.png</p>
    <div class="card second">
      <div class="editors">
        <section class="viewport">
          <svg class="scene" aria-label="放大的立方体和猴头">
            <g stroke="#17181a" stroke-width="1" stroke-linejoin="round">
              <path fill="#949698" d="M254 135l94-67 150 22-62 80z"/><path fill="#868887" d="M254 135l182 35 1 158-157-43z"/><path fill="#444243" d="M436 170l62-80-6 139-55 99z"/>
            </g>
            <use href="#monkey" transform="translate(444 104) scale(.3333)"/>
            <rect x="552" y="220" width="4" height="4" fill="#71d8ff" stroke="#1f4e62"/>
          </svg>
          <header class="bar">
            <button class="dark pair" aria-label="编辑器类型"><svg class="i"><use href="#view3d"/></svg><svg class="c"><use href="#chev"/></svg></button>
            <label class="dark sel mode"><svg class="i"><use href="#object"/></svg><select aria-label="模式"><option>物体模式</option></select><svg class="c"><use href="#chev"/></svg></label>
            <nav class="menus boxed"><button>视图</button><button>选择</button><button>添加</button><button>物体</button></nav>
            <span class="grow3"></span>
            <div class="tools-mid">
              <button class="dark" aria-label="吸管"><svg class="i"><use href="#dropper"/></svg></button>
              <button class="dark" aria-label="F"><svg class="i"><use href="#fbox"/></svg></button>
              <button class="dark pair dim" aria-label="曲线"><svg class="i"><use href="#arc"/></svg><svg class="c"><use href="#chev"/></svg></button>
              <button class="blue" aria-label="层级"><svg class="i"><use href="#tree"/></svg></button>
              <label class="dark sel orient"><svg class="i"><use href="#axes"/></svg><select aria-label="坐标系"><option>全局</option></select><svg class="c"><use href="#chev"/></svg></label>
              <button class="dark pair" aria-label="轴心"><svg class="i"><use href="#link"/></svg><svg class="c"><use href="#chev"/></svg></button>
              <div class="set"><button class="dark dim" aria-label="吸附"><svg class="i"><use href="#magnet"/></svg></button><button class="dark pair" aria-label="吸附选项"><svg class="i"><use href="#snap"/></svg><svg class="c"><use href="#chev"/></svg></button></div>
              <div class="set"><button class="dark dim" aria-label="衰减"><svg class="i"><use href="#prop"/></svg></button><button class="dark pair dim" aria-label="衰减曲线"><svg class="i"><use href="#curve"/></svg><svg class="c"><use href="#chev"/></svg></button></div>
            </div>
            <span class="grow4"></span>
            <div class="tools-right">
              <button class="dark wide" aria-label="可见性"><svg class="i"><use href="#eye"/></svg><svg class="c"><use href="#chev"/></svg></button>
              <div class="set"><button class="blue" aria-label="控件"><svg class="i"><use href="#gizmo"/></svg></button><button class="dark" aria-label="控件选项"><svg class="c"><use href="#chev"/></svg></button></div>
              <div class="set"><button class="blue" aria-label="叠加层"><svg class="i"><use href="#overlay"/></svg></button><button class="dark" aria-label="叠加层选项"><svg class="c"><use href="#chev"/></svg></button></div>
              <button class="dark" aria-label="透视"><svg class="i"><use href="#xray"/></svg></button>
              <div class="set"><button class="dark" aria-label="线框"><svg class="i"><use href="#wire"/></svg></button><button class="dark" aria-label="实体"><svg class="i"><use href="#solid"/></svg></button><button class="dark" aria-label="材质"><svg class="i"><use href="#mat"/></svg></button><button class="dark" aria-label="渲染"><svg class="i"><use href="#render"/></svg></button><button class="dark" aria-label="着色选项"><svg class="c"><use href="#chev"/></svg></button></div>
            </div>
          </header>
          <header class="bar bar-second">
            <div class="set select-modes"><button class="dark" aria-label="新建选择"><svg><use href="#s1"/></svg></button><button class="dark" aria-label="扩展"><svg><use href="#s2"/></svg></button><button class="dark" aria-label="减去"><svg><use href="#s3"/></svg></button><button class="dark" aria-label="反转"><svg><use href="#s4"/></svg></button><button class="dark" aria-label="相交"><svg><use href="#s5"/></svg></button></div>
            <div class="push">
              <button class="dark opt">选项<svg class="c"><use href="#chev"/></svg></button>
              <div class="xyz"><button>X</button><button>Y</button><button>Z</button></div>
              <button class="dark" aria-label="设置"><svg class="i"><use href="#gear"/></svg></button>
            </div>
            <div class="shelf">
              <button aria-label="植物"><svg><use href="#leaf"/></svg></button><button aria-label="液体"><svg><use href="#drop"/></svg></button><button aria-label="卡片"><svg><use href="#cards"/></svg></button><button aria-label="网格"><svg><use href="#quad"/></svg></button><button aria-label="烟雾"><svg><use href="#steam"/></svg></button><button aria-label="角色"><svg><use href="#user"/></svg></button><button aria-label="云"><svg><use href="#cloud"/></svg></button><button class="blue" aria-label="球"><svg><use href="#ball"/></svg></button><button aria-label="灯"><svg><use href="#bulb"/></svg></button><button aria-label="布料"><svg><use href="#shirt"/></svg></button><button aria-label="散布"><svg><use href="#scatter"/></svg></button><button aria-label="扫描"><svg><use href="#scan"/></svg></button><button aria-label="建筑"><svg><use href="#city"/></svg></button><button aria-label="汽车"><svg><use href="#car"/></svg></button><button aria-label="帐篷"><svg><use href="#tent"/></svg></button><button aria-label="菜单"><svg><use href="#menu"/></svg></button>
            </div>
            <div class="ends"><button class="blue" aria-label="筛选"><svg class="i"><use href="#filter"/></svg></button><button class="dark" aria-label="设置"><svg class="i"><use href="#gear"/></svg></button></div>
          </header>
          <div class="stage">
            <div class="toolbar">
              <div class="tool-group"><button class="on sub" aria-label="框选"><svg><use href="#boxsel"/></svg></button><button aria-label="游标"><svg><use href="#cursor"/></svg></button></div>
              <div class="tool-group"><button aria-label="移动"><svg><use href="#move"/></svg></button><button aria-label="旋转"><svg><use href="#rotate"/></svg></button><button class="sub" aria-label="缩放"><svg><use href="#scale"/></svg></button><button aria-label="变换"><svg><use href="#transform"/></svg></button></div>
              <div class="tool-group"><button class="sub" aria-label="标注"><svg><use href="#annotate"/></svg></button><button aria-label="测量"><svg><use href="#measure"/></svg></button></div>
              <div class="tool-group"><button class="sub" aria-label="添加立方体"><svg><use href="#addcube"/></svg></button></div>
              <div class="tool-group"><button aria-label="布尔"><svg><use href="#boolean"/></svg></button></div>
              <div class="tool-group"><button aria-label="框架"><svg><use href="#cage"/></svg></button><button aria-label="调整"><svg><use href="#tweak"/></svg></button></div>
            </div>
            <div class="info">
              <p>用户透视</p><p>(1) Collection | 苏珊娜</p>
              <dl><dt>物体</dt><dd>2</dd><dt>顶点</dt><dd>515</dd><dt>边</dt><dd>1,017</dd><dt>面</dt><dd>506</dd><dt>三角形</dt><dd>980</dd></dl>
            </div>
            <div class="nav-side">
              <svg class="axis"><use href="#axis-gizmo"/></svg>
              <div class="nav-icons"><button aria-label="缩放视图"><svg><use href="#zoomin"/></svg></button><button aria-label="平移"><svg><use href="#hand"/></svg></button><button aria-label="相机"><svg><use href="#camera"/></svg></button><button aria-label="透视"><svg><use href="#persp"/></svg></button><button class="apart" aria-label="添加"><svg><use href="#plus"/></svg></button><button aria-label="图像"><svg><use href="#image"/></svg></button></div>
            </div>
          </div>
        </section>
        <section class="nodes">
          <header class="bar node-bar">
            <button class="dark pair" aria-label="编辑器类型"><svg class="i"><use href="#geo"/></svg><svg class="c"><use href="#chev"/></svg></button>
            <label class="dark sel kind"><select aria-label="类型"><option>修改器</option></select><svg class="c"><use href="#chev"/></svg></label>
            <nav class="menus"><button>视图</button><button>选择</button><button>添加</button><button>节点</button></nav>
            <span class="grow5"></span>
            <div class="set data"><button class="dark pair" aria-label="浏览"><svg class="i"><use href="#ntree"/></svg><svg class="c"><use href="#chev"/></svg></button><input class="name" aria-label="节点树" value="几何节点"><button class="dark count">3</button><button class="dark dim" aria-label="伪用户"><svg class="i"><use href="#shield"/></svg></button><button class="dark" aria-label="复制"><svg class="i"><use href="#copy"/></svg></button><button class="dark" aria-label="断开"><svg class="i"><use href="#x"/></svg></button><button class="pin" aria-label="固定"><svg class="i"><use href="#pin"/></svg></button></div>
            <span class="grow7"></span>
            <div class="node-right"><button class="faint" aria-label="上级"><svg class="i"><use href="#up"/></svg></button><div class="set"><button class="dim" aria-label="吸附"><svg class="i"><use href="#magnet"/></svg></button><button class="dark pair" aria-label="吸附到"><svg class="i"><use href="#grid"/></svg><svg class="c"><use href="#chev"/></svg></button></div><div class="set"><button class="blue" aria-label="叠加层"><svg class="i"><use href="#overlay"/></svg></button><button class="dark" aria-label="叠加层选项"><svg class="c"><use href="#chev"/></svg></button></div></div>
            <div class="ends"><button aria-label="筛选"><svg class="i"><use href="#filter"/></svg></button><button class="dark" aria-label="设置"><svg class="i"><use href="#gear"/></svg></button></div>
          </header>
          <div class="node-body">
            <div class="node-canvas">
              <div class="crumbs"><svg class="sep"><use href="#right"/></svg><svg class="i"><use href="#object"/></svg><span>苏珊娜</span><svg class="sep"><use href="#right"/></svg><svg class="i"><use href="#geo"/></svg><span>几何节点</span><svg class="sep"><use href="#right"/></svg><svg class="i"><use href="#ntree"/></svg><sub>3</sub><span>几何节点</span></div>
              <svg class="wires"><path d="M249 166c20 0 27 49 47 49" fill="none" stroke="#8b8d90" stroke-width="1"/><path d="M249 151c20 0 27 34 47 34M392 134c14 0 20 12 34 12" fill="none" stroke="#0bd49b" stroke-width="1.500"/></svg>
              <article class="node n-in-b"><h3><svg class="c"><use href="#chev"/></svg>组输入</h3><p class="out geo">几何数据</p><p class="out dia silver">缩放</p><p class="out virt"></p></article>
              <article class="node n-scale-b"><h3 class="teal"><svg class="c"><use href="#chev"/></svg>缩放元素</h3><p class="out geo">几何数据</p>
                <label class="drop"><select aria-label="域"><option>面</option></select><svg class="c"><use href="#chev"/></svg></label><label class="drop"><select aria-label="缩放模式"><option>均衡</option></select><svg class="c"><use href="#chev"/></svg></label>
                <p class="in geo">几何数据</p><p class="in dia pink">选中项</p><p class="in dia silver">缩放</p><p class="in dia violet">中心</p></article>
              <article class="node n-out-b"><h3><svg class="c"><use href="#chev"/></svg>组输出</h3><p class="in geo">几何数据</p><p class="in virt"></p></article>
            </div>
            <aside class="side">
              <div class="panel"><h2><svg class="c"><use href="#chev"/></svg>活动工具<svg class="grip"><use href="#grip"/></svg></h2>
                <div class="panel-box"><p><svg class="bx"><use href="#boxsel"/></svg>框选</p><div class="set select-modes"><button class="dark" aria-label="新建"><svg><use href="#s1"/></svg></button><button class="dark" aria-label="扩展"><svg><use href="#s2"/></svg></button><button class="dark" aria-label="减去"><svg><use href="#s3"/></svg></button></div></div></div>
              <nav class="tabs"><button>群组</button><button>节点</button><button class="on">工具</button><button>视图</button><button>节点牧人</button><button>节点组翻译</button><button>伞</button><button>Arrange</button><button>Hot Nod</button></nav>
            </aside>
          </div>
        </section>
      </div>
      <aside class="properties">
        <header class="prop-head"><button class="dark pair" aria-label="编辑器类型"><svg class="i"><use href="#props"/></svg><svg class="c"><use href="#chev"/></svg></button><label class="search"><svg class="i"><use href="#search"/></svg><input type="search" aria-label="搜索" placeholder="搜索"></label><button class="dark" aria-label="选项"><svg class="c"><use href="#chev"/></svg></button></header>
        <div class="prop-body">
          <nav class="prop-tabs"><button aria-label="工具"><svg><use href="#tool"/></svg></button><button class="gap" aria-label="渲染"><svg><use href="#rend"/></svg></button><button aria-label="输出"><svg><use href="#output"/></svg></button><button aria-label="视图层"><svg><use href="#layer"/></svg></button><button aria-label="场景"><svg><use href="#scn"/></svg></button><button class="red" aria-label="世界"><svg><use href="#world"/></svg></button><button class="gap" aria-label="集合"><svg><use href="#archive"/></svg></button><button class="gap orange" aria-label="物体"><svg><use href="#object"/></svg></button><button class="on" aria-label="修改器"><svg><use href="#wrench"/></svg></button><button class="sky" aria-label="粒子"><svg><use href="#parts"/></svg></button><button class="sky" aria-label="物理"><svg><use href="#phys"/></svg></button><button class="sky" aria-label="约束"><svg><use href="#constr"/></svg></button><button class="green" aria-label="数据"><svg><use href="#mesh"/></svg></button><button class="red" aria-label="材质"><svg><use href="#mat"/></svg></button><button class="gap red" aria-label="纹理"><svg><use href="#checker"/></svg></button></nav>
          <div class="prop-main">
            <div class="crumbs prop-crumbs"><svg class="i"><use href="#object"/></svg><span>苏珊娜</span><svg class="sep"><use href="#right"/></svg><svg class="i"><use href="#geo"/></svg><span>几何节点</span><svg class="i pin"><use href="#pin"/></svg></div>
            <button class="add-mod"><svg class="i"><use href="#plus"/></svg><span>添加修改器</span></button>
            <label class="drop full"><select aria-label="添加修改器"><option>添加修改器</option></select><svg class="c"><use href="#chev"/></svg></label>
            <label class="drop full"><select aria-label="添加修改器二"><option>添加修改器</option></select><svg class="c"><use href="#chev"/></svg></label>
            <section class="modifier">
              <header><svg class="c"><use href="#chev"/></svg><svg class="i"><use href="#geo"/></svg><input aria-label="修改器名称" value="几何节点"><button class="dark" aria-label="网格"><svg class="i"><use href="#mesh"/></svg></button><button class="blue" aria-label="编辑模式"><svg class="i"><use href="#vertsel"/></svg></button><button class="blue" aria-label="实时"><svg class="i"><use href="#screen"/></svg></button><button class="blue" aria-label="渲染"><svg class="i"><use href="#photo"/></svg></button><button class="dark" aria-label="更多"><svg class="c"><use href="#chev"/></svg></button><button aria-label="移除"><svg class="i"><use href="#x"/></svg></button><svg class="grip"><use href="#grip"/></svg></header>
              <div class="mod-row"><button class="dark pair" aria-label="浏览"><svg class="i"><use href="#ntree"/></svg><svg class="c"><use href="#chev"/></svg></button><input aria-label="节点组" value="几何节点"><button class="dark num">3</button><button class="dark dim" aria-label="伪用户"><svg class="i"><use href="#shield"/></svg></button><button class="dark" aria-label="复制"><svg class="i"><use href="#copy"/></svg></button><button class="dark" aria-label="断开"><svg class="i"><use href="#x"/></svg></button></div>
              <div class="highlight"><label for="mod-scale">缩放</label><input id="mod-scale" value="0.500"><button aria-label="属性"><svg><use href="#attr"/></svg></button><i></i></div>
              <button class="manage"><svg><use href="#right"/></svg>管理</button>
            </section>
          </div>
        </div>
      </aside>
    </div>
    <div class="below"><div class="note note-b">如果将组输入的灰色接口与缩放接口连接起来，就可以再几何节点修改器<br>面板中对齐进行修改和访问。这样你就可以分别独立缩放两个对象。</div></div>
  </section>
</main>
</body>
</html>
```
FILE: styles.css
```css
* { box-sizing: border-box; }
body, p, h2, h3, dl, dd { margin: 0; }
body {
  background-color: #1e1e1e;
  background-image: radial-gradient(circle, #292929 0 1px, transparent 1px);
  background-size: 13px 13px;
  color: #d4d8dc;
  font: 8px/12px "Inter", "Noto Sans CJK SC", sans-serif;
  overflow: hidden;
}
button, input, select { font: inherit; color: inherit; background: none; border: 0; padding: 0; margin: 0; appearance: none; min-width: 0; outline: 0; }
button { display: flex; align-items: center; justify-content: center; }
svg { display: block; flex: none; }
.defs { position: absolute; width: 0; height: 0; }

/* board */
.board { display: grid; grid-template-columns: 891fr 1134fr; grid-template-rows: minmax(0, 1fr); column-gap: 1px; height: 100vh; padding: 0 11px 0 4px; }
.column { display: flex; flex-direction: column; min-width: 0; min-height: 0; }
.file-name { font: 13px/16px "Noto Sans", sans-serif; color: #6a6a6a; white-space: nowrap; }
.file-name-top { flex: none; height: 6px; padding-bottom: 4px; display: flex; align-items: flex-end; overflow: hidden; }
.card { flex: 1; min-height: 0; display: flex; border: 2px solid #666; border-radius: 6px; overflow: hidden; background: #14181c; }
.below { flex: none; height: 49px; display: flex; align-items: flex-start; position: relative; }
.file-name-bottom { position: absolute; left: -16px; bottom: -2px; }
.note { background: #1e1e1e; border: 2px solid #5c5c5c; border-radius: 6px; padding: 8px 15px 4px; color: #c8c8c8; font: 11px/16px "Noto Sans", "Noto Sans CJK SC", sans-serif; white-space: nowrap; }
.note a { color: #8b79dc; }
.note-a { margin-left: 27%; min-width: 46%; height: 60px; }
.note-b { margin-left: 33%; min-width: 34%; height: 45px; }

.editors { flex: 1; min-width: 0; display: flex; flex-direction: column; }
.viewport { flex: 348 0 0; min-height: 0; display: flex; flex-direction: column; position: relative; overflow: hidden; background: #14181c; }
.second .viewport { flex: 350 0 0; padding-top: 1px; }
.second .nodes { flex: 341 0 0; }
.scene { position: absolute; left: 0; top: 0; width: 100%; height: 100%; }

/* bars */
.bar { flex: none; display: flex; align-items: center; height: 13px; padding: 0 0 0 7px; position: relative; }
.i { width: 11px; height: 11px; }
.c { width: 9px; height: 9px; }
.bar button { height: 13px; min-width: 13px; }
.dark { background: #07090d; border-radius: 2px; }
.blue { background: #24426f; color: #fff; border-radius: 2px; }
.dim { color: #62676e; }
.faint { color: #2f3b45; }
.pair { gap: 1px; }
.set { display: flex; }
.sel { display: flex; align-items: center; height: 13px; padding: 0 2px; gap: 3px; }
.sel select { flex: 1; }
.bar > .pair { width: 21px; margin-right: 6px; }
.mode { width: 61px; margin-right: 4px; }
.menus { display: flex; }
.menus button { width: 26px; }
.boxed button { background: #111c28; }
.boxed .on { background: #15344d; color: #fff; }
.grow3 { flex: 3; } .grow4 { flex: 4; } .grow5 { flex: 5; } .grow7 { flex: 7; }
.tools-mid { display: flex; gap: 3px; }
.orient { width: 43px; margin: 0 3px 0 12px; padding: 0 1px; gap: 2px; }
.tools-right { display: flex; gap: 4px; padding-right: 13px; }
.tools-right .wide { width: 25px; gap: 3px; }
.bar-second { margin-top: 5px; }
.select-modes { gap: 1px; }
.select-modes svg { width: 11px; height: 11px; }
.push { margin-left: auto; display: flex; }
.opt { width: 31px; gap: 4px; margin-right: 6px; }
.xyz { display: flex; gap: 1px; }
.xyz button { width: 19px; background: #22395d; }
.push > .dark:last-child { width: 14px; }
.shelf { display: flex; margin-left: 8px; color: #85888c; }
.shelf button { width: 14px; background: #0a0e13; }
.shelf .blue { background: #1a4470; }
.shelf svg { width: 11px; height: 11px; }
.ends { display: flex; gap: 5px; margin-left: 7px; padding-right: 4px; }

/* viewport contents */
.stage { display: flex; align-items: flex-start; padding: 9px 0 0 6px; position: relative; }
.toolbar { display: flex; flex-direction: column; gap: 4px; }
.tool-group { display: flex; flex-direction: column; gap: 1px; border-radius: 4px; background: #1c2a38; overflow: hidden; box-shadow: 0 0 0 1px #1c2a38; }
.tool-group button { width: 27px; height: 24px; background: #111923; position: relative; }
.tool-group svg { width: 17px; height: 17px; }
.tool-group .on { background: #284a65; }
.tool-group .sub::after { content: ""; position: absolute; right: 2px; bottom: 2px; border: 1px solid; border-color: transparent #bbb #bbb transparent; }
.info { padding-left: 13px; color: #e2e2e2; }
.info p { line-height: 13px; }
.info dl { display: grid; grid-template-columns: 31px auto; margin-top: 7px; line-height: 12px; row-gap: 0; }
.nav-side { margin-left: auto; width: 67px; display: flex; flex-direction: column; }
.axis { width: 67px; height: 60px; }
.nav-icons { display: flex; flex-direction: column; gap: 8px; align-self: flex-end; margin-right: 7px; color: #dcdcdc; }
.nav-icons button { width: 14px; height: 14px; }
.nav-icons svg { width: 12px; height: 12px; }
.nav-icons .apart { margin-top: 24px; }
.nav-icons .apart svg { width: 9px; height: 9px; }

/* node editor */
.nodes { flex: 343 0 0; min-height: 0; display: flex; flex-direction: column; background: #131b25; border-top: 2px solid #090f16; }
.node-bar { height: 18px; background: #172530; }
.kind { width: 47px; padding: 0 1px 0 5px; margin: 0 4px 0 -1px; }
.name { width: 56px; background: #07090d; margin-left: 1px; padding-left: 5px; }
.data .pair { width: 21px; }
.data .count { width: 17px; }
.pin { color: #7c858c; }
.data .pin { margin-left: 5px; }
.node-right { display: flex; gap: 5px; }
.node-bar .ends { margin-left: 12px; }
.node-body { flex: 1; min-height: 0; display: flex; }
.node-canvas { flex: 1; position: relative; min-width: 0; border-right: 2px solid #212b34; border-bottom: 2px solid #1e2832; margin-bottom: 4px; }
.crumbs { display: flex; align-items: center; height: 28px; gap: 5px; }
.sep { width: 7px; height: 7px; }
.crumbs span + .sep { margin: 0 0 0 5px; }
.crumbs sub { font-size: 6px; margin: 4px -3px 0 -6px; }
.node-canvas .i:nth-child(2) { margin: 0 2px 0 0; }
.wires { position: absolute; inset: 0; width: 100%; height: 100%; }
.node { position: absolute; width: 96px; background: #1b2435; border-radius: 3px; box-shadow: 0 1px 4px #060a0f; padding-bottom: 3px; }
.node h3 { font: inherit; height: 14px; display: flex; align-items: center; gap: 2px; padding-left: 6px; background: #1a212d; border-radius: 3px 3px 0 0; }
.node h3 { margin-bottom: 2px; }
.node .teal { background: #12665d; }
.n-in-a { left: 177px; top: 136px; } .n-scale-a { left: 319px; top: 119px; } .n-out-a { left: 450px; top: 131px; }
.n-in-b { left: 153px; top: 127px; } .n-scale-b { left: 296px; top: 110px; } .n-out-b { left: 426px; top: 122px; }
.node .in, .node .out { position: relative; height: 15px; line-height: 15px; padding: 0 7px; }
.node .out { text-align: right; }
.in::before, .out::before { content: ""; position: absolute; top: 5px; width: 6px; height: 6px; border-radius: 50%; background: #0bd49b; }
.in::before { left: -3px; } .out::before { right: -3px; }
.virt::before { background: #2f3235; border: 1px solid #696c70; }
.node .dia::before { border-radius: 1px; transform: rotate(45deg); width: 5px; height: 5px; }
.pink::before { background: radial-gradient(circle, #4a2c4a 0 1px, #d7a6d7 1px); }
.grey::before { background: radial-gradient(circle, #30353c 0 1px, #a8abae 1px); }
.silver::before { background: #a1a1a1; }
.violet::before { background: #6560c9; }
.drop { display: flex; align-items: center; height: 13px; margin: 0 7px 4px; padding: 0 0 0 5px; background: #05070a; border-radius: 2px; }
.out + .drop { margin-top: 4px; }
.drop + .in { margin-top: -2px; }
.drop select { flex: 1; }
.node .field { display: flex; align-items: center; }
.field label { background: #121924; padding-left: 10px; flex: 1; line-height: 13px; }
.field input { background: #121924; width: 40px; height: 13px; padding-left: 9px; }

.side { width: 199px; display: flex; background: #10171c; padding-left: 9px; overflow: hidden; }
.panel { flex: 1; min-width: 0; }
.panel h2 { font: inherit; font-size: 8px; height: 18px; display: flex; align-items: center; gap: 3px; padding: 0 6px 0 3px; color: #eee; }
.panel h2 .grip { margin-left: auto; }
.grip { width: 8px; height: 5px; color: #4d565e; }
.panel-box { background: #172230; border-radius: 0 0 3px 3px; height: 46px; padding: 4px 6px; }
.panel-box p { display: flex; align-items: center; gap: 6px; padding-left: 4px; margin-bottom: 5px; }
.bx { width: 16px; height: 16px; }
.panel-box .select-modes button { width: 12px; height: 12px; }
.tabs { width: 12px; margin: 2px 2px 0 4px; display: flex; flex-direction: column; gap: 3px; flex: none; }
.tabs button { flex: none; writing-mode: vertical-rl; text-orientation: sideways; padding: 5px 0; width: 12px; background: #0b1019; border-radius: 2px; white-space: nowrap; }
.tabs .on { background: #26445a; color: #fff; }

/* properties */
.properties { width: 240px; flex: none; background: #172530; border-left: 4px solid #0b1117; display: flex; flex-direction: column; }
.prop-head { display: flex; align-items: center; height: 16px; padding: 0 6px 0 4px; justify-content: space-between; }
.prop-head .pair { width: 21px; height: 14px; }
.prop-head > .dark { min-width: 13px; height: 13px; }
.search { display: flex; align-items: center; gap: 4px; width: 82px; height: 14px; background: #0b0f15; border-radius: 2px; padding-left: 3px; }
.search input { width: 50px; }
.search input::placeholder { color: #555b62; }
.prop-body { flex: 1; display: flex; min-height: 0; }
.prop-tabs { flex: none; width: 18px; background: #0b131b; padding-top: 8px; display: flex; flex-direction: column; gap: 2px; }
.prop-tabs button { width: 18px; height: 18px; flex: none; }
.prop-tabs svg { width: 11px; height: 11px; }
.prop-tabs .gap { margin-top: 5px; }
.prop-tabs .on { background: #1d3d59; color: #69a4f2; }
.red { color: #c15463; } .orange { color: #d98a3c; } .sky { color: #5f83c6; } .green { color: #13b37c; }
.prop-main { flex: 1; min-width: 0; padding: 0 6px; }
.prop-crumbs { height: 28px; padding: 0 1px; }
.prop-crumbs .pin { margin-left: auto; }
.add-mod { width: 100%; height: 13px; margin: 4px 0 5px; background: #0e131b; border-radius: 2px; padding: 0 3px; }
.add-mod .i { width: 9px; height: 9px; }
.add-mod span { flex: 1; }
.drop.full { margin: 0 0 5px; height: 13px; }
.modifier { margin-top: 8px; border: 1px solid #2f4b66; border-radius: 3px; background: #1a212b; height: 75px; }
.modifier header { height: 17px; display: flex; align-items: center; background: #202d3a; padding: 0 5px 0 3px; }
.modifier header > .i { margin: 0 7px 0 3px; }
.modifier header input { flex: 1; width: 0; background: #0c1118; height: 13px; padding-left: 6px; }
.modifier button { flex: none; height: 13px; width: 14px; }
.modifier header .grip { margin-left: 10px; }
.mod-row { display: flex; align-items: center; padding: 6px 5px 0 6px; gap: 1px; }
.mod-row .pair { width: 21px; }
.mod-row input { flex: 1; width: 0; background: #0c1118; height: 13px; padding-left: 5px; }
.mod-row .num { width: 29px; }
.highlight { display: flex; align-items: center; height: 18px; margin: 2px 6px 0 50px; border: 2px solid #d6231b; background: #0f151d; }
.highlight label { flex: none; width: 31px; padding-left: 9px; background: #1b2430; line-height: 13px; }
.highlight input { flex: 1; width: 0; text-align: center; }
.highlight svg { width: 12px; height: 12px; }
.highlight i { width: 3px; height: 3px; border-radius: 50%; background: #eee; margin: 0 3px 0 4px; }
.modifier .manage { width: auto; margin: 2px 0 0 9px; gap: 4px; }
.manage svg { width: 7px; height: 7px; }
```
